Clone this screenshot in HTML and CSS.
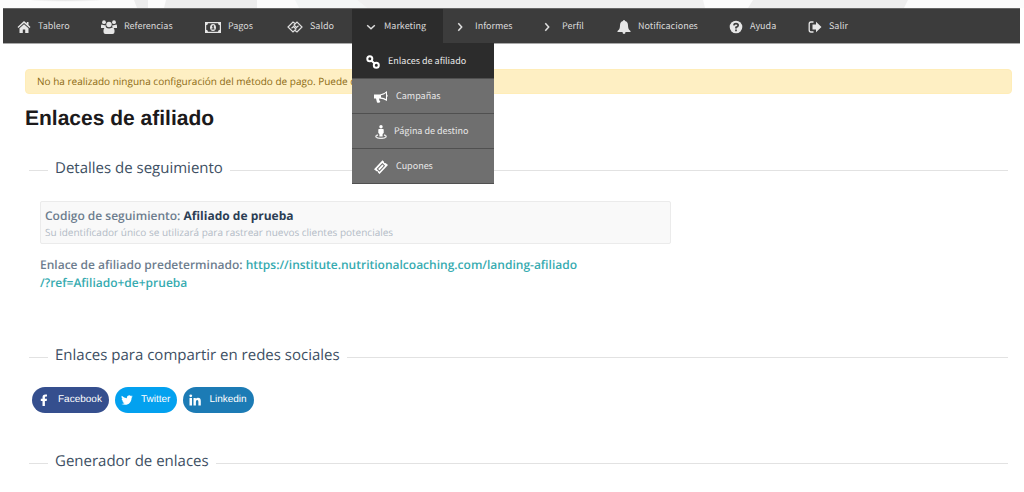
FILE: index.html
```html
<!DOCTYPE html>
<html lang="es">
<head>
<meta charset="utf-8">
<title>Enlaces de afiliado</title>
<link rel="stylesheet" href="styles.css">
</head>
<body>
<svg class="banner" viewBox="0 0 1024 8" preserveAspectRatio="none" aria-hidden="true">
  <defs><radialGradient id="shade" cx="50%" cy="0%" r="60%"><stop offset="0" stop-color="#e2e2e2"/><stop offset="1" stop-color="#fcfcfc"/></radialGradient></defs>
  <rect width="1024" height="8" fill="#fcfcfc"/>
  <path d="M30 0h72c-16 4-56 4-72 0z" fill="url(#shade)"/>
  <path d="M134 0h14v8h-11z" fill="#ededed"/>
  <path d="M166 0h91v8h-93z" fill="#ededed"/>
  <path d="M295 0h62l10 8h-68z" fill="#f4f6f6"/>
  <path d="M357 0h346l2 8H367z" fill="#f0f0f0"/>
  <path d="M753 0h155l-4 8H748z" fill="#eeeeee"/>
</svg>
<nav class="nav" aria-label="Principal">
  <a class="nav-item home" href="#"><svg class="icon" viewBox="0 0 14 14"><path d="M7 1 0.5 7l.9 1L7 3l5.600 5 .9-1-2-2V2H9.800v1.500zM2.500 8.200V13H5.800V9.500h2.400V13h3.300V8.200L7 4.200z"/></svg>Tablero</a>
  <a class="nav-item refs" href="#"><svg class="icon wide" viewBox="0 0 16 14"><circle cx="3" cy="2.200" r="1.900"/><circle cx="13" cy="2.200" r="1.900"/><circle cx="8" cy="4.500" r="2.700"/><path d="M0 8V6q0-2 1.500-1.300Q3 5.500 4.500 5q0 2 1 3zM16 8V6q0-2-1.500-1.300Q13 5.500 11.500 5q0 2-1 3zM2.500 12V10q.3-2.800 2.500-2.500 3 2 6 0 2.200-.3 2.500 2.500v2q0 2-2 2h-7q-2 0-2-2z"/></svg>Referencias</a>
  <a class="nav-item pagos" href="#"><svg class="icon wide" viewBox="0 0 16 14"><path fill-rule="evenodd" d="M0 2h16v11H0zM3 3.200Q2.800 5 1.200 5.200v4.600Q2.800 10 3 11.800h10q.2-1.800 1.800-2V5.200Q13.200 5 13 3.200z"/><path fill-rule="evenodd" d="M8 4c-4 0-4 7 0 7s4-7 0-7zM7 6l1-.8h.8v3.300h.7v1h-3v-1h1V6.600L7 7z"/></svg>Pagos</a>
  <a class="nav-item saldo" href="#"><svg class="icon wide line thin" viewBox="0 0 16 14"><path d="M8 3.500 6 2 1 7l5 5 3-3-2.500-2.500L4.500 8.300M8 10.500l2 1.500 5-5-5-5-3 3 2.500 2.500 2-1.800"/></svg>Saldo</a>
  <div class="menu">
    <button class="nav-item marketing" type="button" aria-expanded="true"><svg class="icon small line" viewBox="0 0 10 10"><path d="m1.200 3.300 3.800 3.400 3.800-3.400"/></svg>Marketing</button>
    <div class="dropdown">
      <a class="drop-item current" href="#"><svg class="icon line thick" viewBox="0 0 14 14"><circle cx="3.800" cy="3.700" r="2.500"/><circle cx="10.300" cy="10.300" r="2.500"/><path d="m5 5.200 4.200 3.800"/></svg>Enlaces de afiliado</a>
      <a class="drop-item" href="#"><svg class="icon" viewBox="0 0 14 14"><path fill-rule="evenodd" d="M0 4.500h6Q10 4 13 1v3.500q1.300 1 0 2.500v4Q9.500 8.500 5 8.500q0 2 1.300 3.200-.6 1.500-3.300.8L2 8.500H0zM7 5.300v2.300q3 .3 5 1.500V3Q10 5 7 5.300z"/></svg>Campañas</a>
      <a class="drop-item landing" href="#"><svg class="icon" viewBox="0 0 14 14"><circle cx="7" cy="1.800" r="1.700"/><path d="M5 4h4q.7 0 .7.700V8L8.600 9v2.500H5.400V9L4.300 8V4.700Q4.300 4 5 4z"/><path class="stroke" d="M4 10C0 11 2 13.400 7 13.400S14 11 10 10"/></svg>Página de destino</a>
      <a class="drop-item" href="#"><svg class="icon" viewBox="0 0 14 14"><path fill-rule="evenodd" d="m0 9.300 8.500-9 1.500 1.500q-.3 1.600 1.500 1.300L14 5l-8.500 9L4 12.500q.3-1.600-1.500-1.300zM2.700 8.900l2.800 2.800 5.600-6L8.400 2.900zM4.100 8.900l4.300-4.500 1.300 1.300-4.200 4.500z"/></svg>Cupones</a>
    </div>
  </div>
  <button class="nav-item informes" type="button"><svg class="icon small line" viewBox="0 0 10 10"><path d="m3.300 1.200 3.400 3.800-3.400 3.800"/></svg>Informes</button>
  <button class="nav-item perfil" type="button"><svg class="icon small line" viewBox="0 0 10 10"><path d="m3.300 1.200 3.400 3.800-3.400 3.800"/></svg>Perfil</button>
  <a class="nav-item notif" href="#"><svg class="icon" viewBox="0 0 14 14"><path d="M7 0q1 0 1 1 3 .7 3 4.500 0 4 2.500 5.500v1h-5Q8.500 14 7 14t-1.500-2h-5v-1Q3 9.500 3 5.500 3 1.700 6 1q0-1 1-1z"/></svg>Notificaciones</a>
  <a class="nav-item ayuda" href="#"><svg class="icon" viewBox="0 0 14 14"><circle cx="7" cy="7" r="6.300"/><path class="cut" d="M4.800 5.300Q5 3.600 7 3.600q2.200 0 2.200 1.700Q9.200 6.600 7 7.400v1M7 9.500v1.700"/></svg>Ayuda</a>
  <a class="nav-item salir" href="#"><svg class="icon" viewBox="0 0 14 14"><path d="M4.500 4.500H8V1.800L13.500 7 8 12.200V9.500H4.500z"/><path class="stroke" d="M5.500 2H3Q1.200 2 1.200 4v6q0 2 1.800 2h2.500"/></svg>Salir</a>
</nav>
<main class="page">
  <p class="alert">No ha realizado ninguna configuración del método de pago. Puede co</p>
  <h1 class="title">Enlaces de afiliado</h1>
  <section class="section tracking">
    <h2 class="heading">Detalles de seguimiento</h2>
    <div class="code-box">
      <p class="code">Codigo de seguimiento: <strong class="code-value">Afiliado de prueba</strong></p>
      <p class="hint">Su identificador único se utilizará para rastrear nuevos clientes potenciales</p>
    </div>
    <p class="default-link">Enlace de afiliado predeterminado: <a class="url" href="#">https://institute.nutritionalcoaching.com/landing-afiliado<br>/?ref=Afiliado+de+prueba</a></p>
  </section>
  <section class="section social">
    <h2 class="heading">Enlaces para compartir en redes sociales</h2>
    <div class="shares">
      <button class="share facebook" type="button"><svg class="logo" viewBox="0 0 12 12"><path d="M4.500 12V7H2.800V4.800h1.700V3.200Q4.500.5 7.200.5H9v2.100H7.900q-1 0-1 1v1.200H9L8.700 7H6.900v5z"/></svg>Facebook</button>
      <button class="share twitter" type="button"><svg class="logo" viewBox="0 0 12 12"><path d="M.8 1.800Q3 4.200 5.900 4.300 5.500 1.400 8.200 1.200q1 0 1.700.7l1.500-.5-1 1.300 1.400-.3-1.200 1.300C10.500 9 6.500 12.500.2 10q2.100 0 3.400-1.100-1.800-.1-2.200-1.700h1Q.6 6.500.6 4.700l1 .3Q0 3.600.8 1.800z"/></svg>Twitter</button>
      <button class="share linkedin" type="button"><svg class="logo" viewBox="0 0 12 12"><path d="M.5 4H3v7.500H.5zM4.500 4h2.300v1.100Q7.500 3.800 9 3.800q2.800 0 2.800 3.300v4.400H9.400V7.700Q9.400 6 8.200 6 6.900 6 6.900 7.700v3.800H4.500z"/><circle cx="1.750" cy="1.800" r="1.400"/></svg>Linkedin</button>
    </div>
  </section>
  <section class="section">
    <h2 class="heading">Generador de enlaces</h2>
  </section>
</main>
</body>
</html>
```
FILE: styles.css
```css
* { box-sizing: border-box; }
body { margin: 0; background: #fff; font-family: "Open Sans", sans-serif; text-rendering: geometricPrecision; }
p, h1, h2 { margin: 0; }
a { text-decoration: none; }
button { border: 0; cursor: pointer; text-rendering: inherit; }

.banner { display: block; width: 100%; height: 8px; }
.nav {
  display: flex;
  height: 36px;
  margin: 0 4px 0 3px;
  border-top: 1px solid #666;
  border-bottom: 1px solid #a9a9a9;
  background: #3c3c3c;
}
.nav-item, .drop-item {
  display: flex;
  align-items: center;
  color: #dadada;
  font: 9px/14px "Noto Sans CJK SC", sans-serif;
  white-space: nowrap;
}
.nav-item { gap: 7px; padding: 0 0 1px 14px; background: transparent; }
.icon { flex: none; width: 14px; height: 14px; margin-top: 2px; fill: #e6e6e6; }
.wide { width: 16px; }
.small { width: 10px; height: 10px; margin-top: 3px; }
.line { fill: none; stroke: #e0e0e0; stroke-width: 1.5; }
.thin { stroke-width: 1.2; }
.stroke { fill: none; stroke: #e6e6e6; stroke-width: 1.3; }
.cut { fill: none; stroke: #3c3c3c; stroke-width: 1.7; }
.home { width: 84px; }
.refs { width: 104px; }
.pagos { width: 82px; }
.saldo { width: 79px; }
.menu { position: relative; display: flex; }
.marketing { width: 91px; gap: 8px; background: #2c2c2c; }
.informes { width: 87px; padding-left: 12px; }
.perfil { width: 73px; padding-left: 12px; }
.informes, .perfil { gap: 10px; }
.notif { width: 112px; }
.ayuda { width: 79px; }

.dropdown {
  position: absolute;
  top: 100%;
  left: 0;
  z-index: 1;
  width: 142px;
}
.drop-item {
  gap: 8px;
  height: 35px;
  padding-left: 22px;
  border-bottom: 1px solid #505050;
  background: #6f6f6f;
  color: #e8e8e8;
}
.drop-item .icon { fill: #fff; }
.drop-item .line { fill: none; stroke: #fff; }
.drop-item .thick { stroke-width: 2; }
.landing { gap: 6px; }
.current { height: 36px; padding-left: 14px; background: #2c2c2c; }

.page { padding: 25px 12px 20px 25px; }
.alert {
  padding: 4px 11px;
  border: 1px solid #ffedb8;
  border-radius: 4px;
  background: #feefc3;
  color: #8c6a12;
  font-size: 10px;
  line-height: 15px;
}
.title {
  margin-top: 13px;
  color: #1c1a1b;
  font: bold 21px/24px "Liberation Sans", Arial, sans-serif;
}
.section { padding: 0 4px; }
.heading {
  display: flex;
  align-items: center;
  gap: 7px;
  color: #3d4f63;
  font-size: 15px;
  font-weight: 400;
  line-height: 20px;
}
.heading::before, .heading::after {
  content: "";
  height: 1px;
  margin-top: 4px;
  background: #e2e2e2;
}
.heading::before { width: 19px; }
.heading::after { flex: 1; }
.tracking { margin-top: 27px; }
.code-box {
  max-width: 631px;
  margin: 23px 0 0 11px;
  padding: 5px 4px 3px;
  border: 1px solid #ebebeb;
  border-radius: 2px;
  background: #f9f9f9;
}
.code, .default-link { color: #6d7d8e; font-size: 12px; font-weight: 600; line-height: 18px; }
.code-value { color: #2c3e54; font-weight: 700; }
.hint { color: #b3bbc6; font-size: 10px; line-height: 15px; }
.default-link { margin: 12px 0 0 11px; }
.url { color: #36abb0; }
.social { margin-top: 53px; }
.shares { display: flex; gap: 6px; margin: 22px 0 0 3px; }
.share {
  display: flex;
  align-items: center;
  gap: 8px;
  height: 26px;
  padding: 0 7px 1px 6px;
  border-radius: 13px;
  color: #fff;
  font: 10px/14px "Liberation Sans", Arial, sans-serif;
}
.logo { width: 12px; height: 12px; margin-top: 1px; fill: #fff; }
.facebook { background: #354f8e; }
.twitter { background: #03a1ef; }
.linkedin { background: #1c7bb5; }
.social + .section { margin-top: 38px; }
```
